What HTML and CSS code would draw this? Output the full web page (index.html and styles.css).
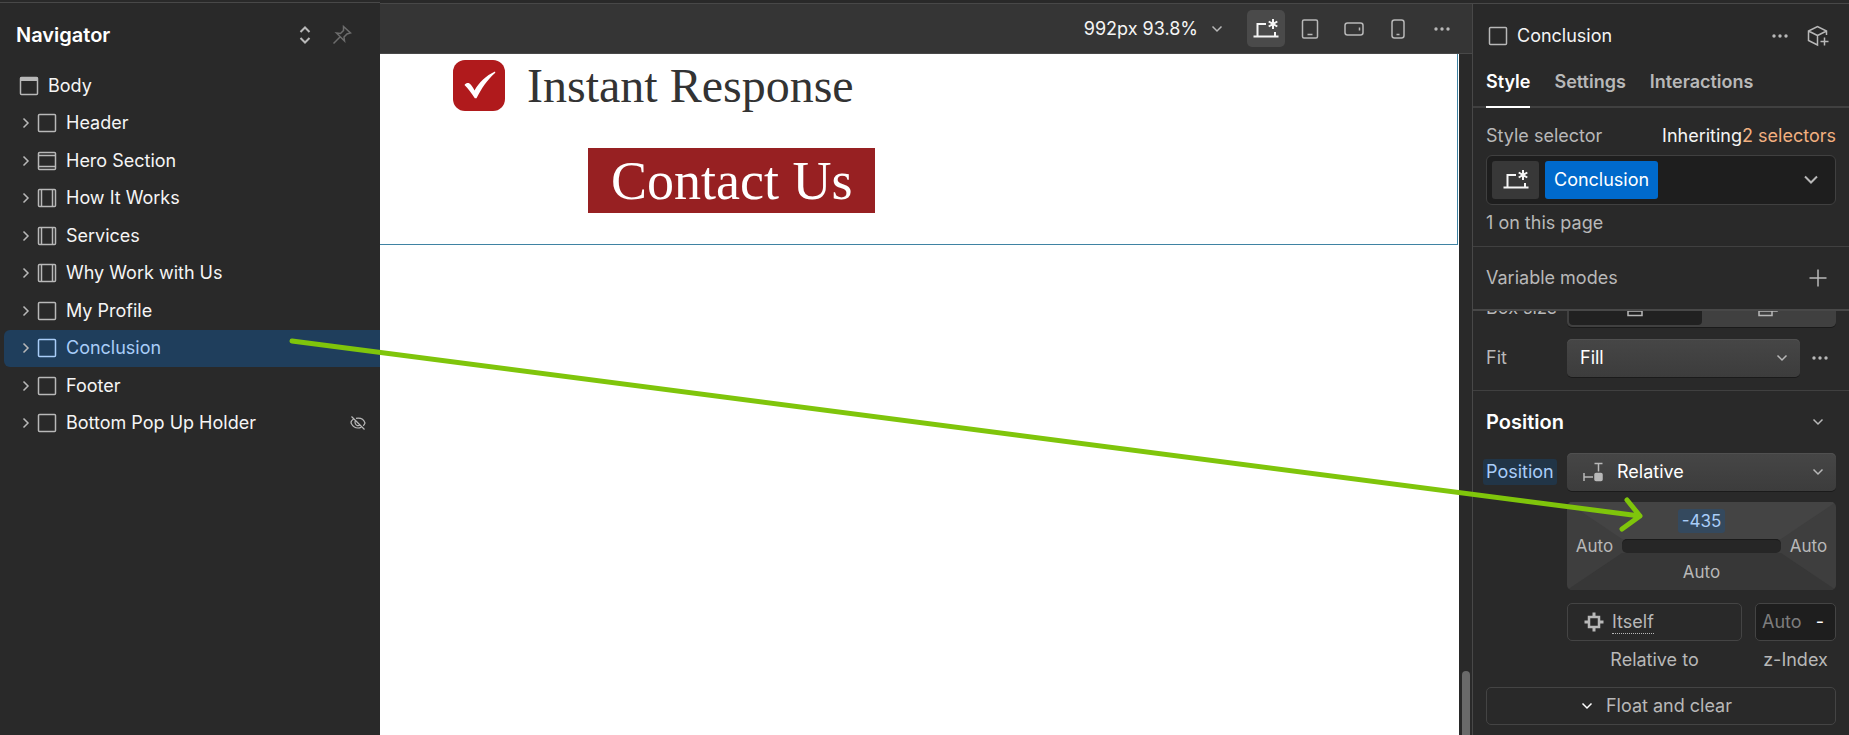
FILE: index.html
```html
<!DOCTYPE html>
<html lang="en">
<head>
<meta charset="utf-8">
<title>Designer</title>
<link rel="stylesheet" href="styles.css">
</head>
<body>
<svg class="symbols" width="0" height="0" aria-hidden="true">
  <symbol id="i-box" viewBox="0 0 20 20"><rect x="1.5" y="1.5" width="17" height="17" rx="1"/></symbol>
  <symbol id="i-body" viewBox="0 0 20 20"><rect x="1.5" y="1.5" width="17" height="17" rx="1"/><path d="M1.5 3h17" stroke-width="4"/></symbol>
  <symbol id="i-section" viewBox="0 0 20 20"><rect x="1.5" y="1.5" width="17" height="17" rx="1"/><path d="M1.500 4.500h17M1.500 15.500h17"/></symbol>
  <symbol id="i-container" viewBox="0 0 20 20"><rect x="1.5" y="1.5" width="17" height="17" rx="1"/><path d="M4.500 1.500v17M15.500 1.500v17"/></symbol>
  <symbol id="i-right" viewBox="0 0 10 14"><path d="M2.500 2.500 7 7l-4.500 4.500"/></symbol>
  <symbol id="i-down" viewBox="0 0 14 10"><path d="M2.500 2.500 7 7l4.500-4.500"/></symbol>
  <symbol id="i-dots" viewBox="0 0 18 6"><g fill="currentColor" stroke="none"><circle cx="3" cy="3" r="1.700"/><circle cx="9" cy="3" r="1.700"/><circle cx="15" cy="3" r="1.700"/></g></symbol>
  <symbol id="i-base" viewBox="0 0 26 22"><path stroke-width="2" d="M.5 18.500h25M4.500 18V6H13M22 14v4"/><path stroke-width="2" d="M20 1v10M15.700 3.500l8.600 5M24.300 3.500l-8.600 5"/></symbol>
</svg>
<div class="app">
  <aside class="navigator">
    <header class="nav-head">
      <h2 class="heading">Navigator</h2>
      <button class="icon-btn" aria-label="Expand or collapse all"><svg class="icon" width="14" height="20" viewBox="0 0 14 20"><path stroke-width="2" d="M2.500 7 7 2.500 11.500 7M2.500 13 7 17.500l4.500-4.500"/></svg></button>
      <button class="icon-btn dim" aria-label="Pin"><svg class="icon" width="20" height="20" viewBox="0 0 20 20"><path d="M1.500 18.500 8 12M11.500 1.500l7 6.500-3.500 1-3 3 .5 4L4.500 8l4 .5 3-3z"/></svg></button>
    </header>
    <ul class="tree">
      <li class="row root"><svg class="icon glyph"><use href="#i-body"/></svg><span>Body</span></li>
      <li class="row"><svg class="icon twist"><use href="#i-right"/></svg><svg class="icon glyph"><use href="#i-box"/></svg><span>Header</span></li>
      <li class="row"><svg class="icon twist"><use href="#i-right"/></svg><svg class="icon glyph"><use href="#i-section"/></svg><span>Hero Section</span></li>
      <li class="row"><svg class="icon twist"><use href="#i-right"/></svg><svg class="icon glyph"><use href="#i-container"/></svg><span>How It Works</span></li>
      <li class="row"><svg class="icon twist"><use href="#i-right"/></svg><svg class="icon glyph"><use href="#i-container"/></svg><span>Services</span></li>
      <li class="row"><svg class="icon twist"><use href="#i-right"/></svg><svg class="icon glyph"><use href="#i-container"/></svg><span>Why Work with Us</span></li>
      <li class="row"><svg class="icon twist"><use href="#i-right"/></svg><svg class="icon glyph"><use href="#i-box"/></svg><span>My Profile</span></li>
      <li class="row selected"><svg class="icon twist"><use href="#i-right"/></svg><svg class="icon glyph"><use href="#i-box"/></svg><span>Conclusion</span></li>
      <li class="row"><svg class="icon twist"><use href="#i-right"/></svg><svg class="icon glyph"><use href="#i-box"/></svg><span>Footer</span></li>
      <li class="row"><svg class="icon twist"><use href="#i-right"/></svg><svg class="icon glyph"><use href="#i-box"/></svg><span class="grow">Bottom Pop Up Holder</span><svg class="icon" width="16" height="16" viewBox="0 0 16 16"><path stroke-width="1.200" d="M1.500 1.500l13 13M3.500 4C2 5 1 6.500 1 8c1.500 3 4 5 7 5 1.200 0 2.300-.3 3.200-.8M6 3.300C11 2.500 14 5 15 8c-.4 1-1 2-1.800 2.700M5.500 5.500C4.500 7 5 9.500 7 10.500c1 .4 2 .2 3-.4"/></svg></li>
    </ul>
  </aside>

  <main class="stage">
    <div class="toolbar">
      <button class="zoom"><span>992px</span><span>93.8%</span><svg class="icon down"><use href="#i-down"/></svg></button>
      <div class="devices">
        <button class="device active" aria-label="Desktop"><svg class="icon base"><use href="#i-base"/></svg></button>
        <button class="device" aria-label="Tablet"><svg class="icon" width="18" height="22" viewBox="0 0 18 22"><rect x="1.500" y="2" width="15" height="18" rx="1.500"/><path d="M6.500 16.500h5"/></svg></button>
        <button class="device" aria-label="Mobile landscape"><svg class="icon" width="20" height="14" viewBox="0 0 20 14"><rect x="1" y="1" width="18" height="12" rx="2.500"/><path d="M15.500 5.500v3"/></svg></button>
        <button class="device" aria-label="Mobile portrait"><svg class="icon" width="14" height="20" viewBox="0 0 14 20"><rect x="1" y="1" width="12" height="18" rx="2.500"/><path d="M5.500 15.500h3"/></svg></button>
        <button class="device" aria-label="More"><svg class="icon dots"><use href="#i-dots"/></svg></button>
      </div>
    </div>
    <div class="viewport">
      <div class="page">
        <section class="conclusion">
          <div class="benefit">
            <svg width="52" height="51" viewBox="0 0 52 51" aria-hidden="true"><rect width="52" height="51" rx="12" fill="#b01a1c"/><path fill="#fff" d="M11.500 25c1.500-2 3.500-2.500 5-1.500 2 1.500 3.500 4 5 7C26 22.500 33 15.500 42 11.500l.3 1.200C34 20 28.500 28.500 23.500 38.200h-1.700C18.500 33 15 28.500 11.500 25z"/></svg>
            <span>Instant Response</span>
          </div>
          <a class="contact" href="#">Contact Us</a>
        </section>
      </div>
      <div class="gutter"><div class="thumb"></div></div>
    </div>
  </main>

  <aside class="inspector">
    <header class="insp-head">
      <svg class="icon glyph"><use href="#i-box"/></svg><span class="grow">Conclusion</span>
      <button class="icon-btn" aria-label="More"><svg class="icon dots"><use href="#i-dots"/></svg></button>
      <button class="icon-btn" aria-label="Create component"><svg class="icon" width="22" height="22" viewBox="0 0 22 22"><path d="M19.500 10V6L10.500 1.500l-9 4.500v9.500l9 4.500V10.500l9-4.500M1.500 6l9 4.500M17.500 12.500v8M13.500 16.500h8"/></svg></button>
    </header>
    <nav class="tabs">
      <button class="tab current">Style</button>
      <button class="tab">Settings</button>
      <button class="tab">Interactions</button>
    </nav>
    <section class="selector">
      <div class="line"><span class="grow">Style selector</span><span class="white">Inheriting</span><a class="inherit" href="#">2 selectors</a></div>
      <div class="selector-box">
        <button class="chip" aria-label="Breakpoint"><svg class="icon base"><use href="#i-base"/></svg></button>
        <button class="chip class-chip">Conclusion</button>
        <button class="icon-btn push" aria-label="Open selector list"><svg class="icon" width="16" height="12" viewBox="0 0 16 12"><path stroke-width="2" d="M2 2.500l6 6 6-6"/></svg></button>
      </div>
      <p class="count">1 on this page</p>
    </section>
    <section class="modes">
      <span class="grow">Variable modes</span>
      <button class="icon-btn" aria-label="Add"><svg class="icon" width="18" height="18" viewBox="0 0 18 18"><path d="M9 .500v17M.500 9h17"/></svg></button>
    </section>
    <div class="scroller">
      <section class="size">
        <div class="field boxsize">
          <span>Box size</span>
          <div class="segments">
            <button class="segment on" aria-label="Border box"><svg class="icon" width="16" height="18" viewBox="0 0 16 18"><path d="M1 1v15.500h14V1M1 12h14"/></svg></button>
            <button class="segment" aria-label="Content box"><svg class="icon" width="20" height="18" viewBox="0 0 20 18"><path d="M1 12v4.500h13V12M1 12h18V3"/></svg></button>
          </div>
        </div>
        <div class="field">
          <label for="fit">Fit</label>
          <div class="fit">
            <div class="select"><select id="fit"><option>Fill</option></select><svg class="icon down"><use href="#i-down"/></svg></div>
            <button class="icon-btn" aria-label="More"><svg class="icon dots"><use href="#i-dots"/></svg></button>
          </div>
        </div>
      </section>
      <section class="position">
        <div class="line"><h3 class="heading grow">Position</h3><button class="icon-btn" aria-label="Collapse"><svg class="icon down"><use href="#i-down"/></svg></button></div>
        <div class="field">
          <label class="tag" for="pos">Position</label>
          <div class="select with-icon">
            <svg class="icon lead" width="20" height="20" viewBox="0 0 20 20"><path d="M11.500 1.500h8M15.500 1.500v8M1 11v8M1 15h9"/><rect x="12" y="11.500" width="7" height="7" rx="1" fill="currentColor"/></svg>
            <select id="pos"><option>Relative</option></select><svg class="icon down"><use href="#i-down"/></svg></div>
        </div>
        <div class="field">
          <div class="offsets">
            <svg class="facets" viewBox="0 0 269 88" preserveAspectRatio="none" aria-hidden="true"><path d="M0 0h269L214 37H55z" fill="#444"/><path d="M0 88h269L214 51H55z" fill="#373737"/></svg>
            <button class="side top">-435</button>
            <button class="side left">Auto</button>
            <div class="hollow"></div>
            <button class="side right">Auto</button>
            <button class="side bottom">Auto</button>
          </div>
        </div>
        <div class="field pair">
          <div class="pair-body">
            <div class="cell wide">
              <button class="outline" id="rel"><svg class="icon" width="20" height="20" viewBox="0 0 20 20"><rect x="5" y="5" width="10" height="10" stroke-width="2.500"/><path stroke-width="3" d="M10 0.500v4M10 15.500v4M.5 10h4M15.500 10h4"/></svg><span class="dotted">Itself</span></button>
              <label for="rel">Relative to</label>
            </div>
            <div class="cell">
              <div class="outline well"><input id="z" placeholder="Auto"><button class="unit">-</button></div>
              <label for="z">z-Index</label>
            </div>
          </div>
        </div>
        <button class="outline float"><svg class="icon down"><use href="#i-down"/></svg>Float and clear</button>
      </section>
    </div>
  </aside>
</div>
<svg class="arrow" viewBox="0 0 1849 735" aria-hidden="true"><path d="M292 341 1640 516M1627 500l13 16-18 13"/></svg>
</body>
</html>
```

FILE: styles.css
```css
* { box-sizing: border-box; }
body {
  margin: 0;
  background: #292929;
  color: #f5f5f5;
  font: 18px/24px Inter, "Liberation Sans", sans-serif;
}
button, input, select { font: inherit; color: inherit; background: none; border: 0; padding: 0; margin: 0; }
h2, h3, p, ul { margin: 0; padding: 0; list-style: none; }
.symbols { position: absolute; }
.app {
  display: grid;
  grid-template-columns: 380px minmax(0, 1fr) 377px;
  height: 100vh;
  padding-top: 2px;
  overflow: hidden;
}
.icon { fill: none; stroke: currentColor; stroke-width: 1.5; color: #b8b8b8; flex: none; display: block; }
.glyph { width: 20px; height: 20px; }
.twist { width: 10px; height: 14px; }
.down { width: 14px; height: 10px; }
.dots { width: 18px; height: 6px; }
.base { width: 26px; height: 22px; color: #f5f5f5; }
.grow { flex: 1; }
.white { color: #f5f5f5; }
.icon-btn { display: flex; align-items: center; justify-content: center; }
.heading { font-size: 20px; line-height: 24px; font-weight: 600; color: #fff; }

.navigator { border-top: 1px solid #484848; }
.nav-head { display: flex; align-items: center; gap: 20px; height: 64px; padding: 0 28px 0 16px; }
.nav-head .heading { flex: 1; }
.dim .icon { color: #6c6c6c; }
.tree { display: grid; grid-auto-rows: 1fr; min-height: 375px; padding-left: 4px; }
.row { display: flex; align-items: center; gap: 9px; padding: 0 14px 0 17px; border-radius: 6px 0 0 6px; }
.row .twist { margin-right: -3px; }
.row.root { padding-left: 15px; }
.selected { background: #1f3e5c; color: #a9cdf8; }
.selected .glyph { color: #a9cdf8; }

.stage { display: flex; flex-direction: column; margin-top: 1px; }
.toolbar {
  display: flex; align-items: center; justify-content: flex-end; gap: 23px;
  height: 51px; padding: 0 11px; background: #353535;
  border-top: 1px solid #484848; border-bottom: 1px solid #484848;
}
.zoom { display: flex; align-items: center; gap: 5px; }
.zoom .down { margin-left: 7px; }
.devices { display: flex; gap: 6px; }
.device { display: grid; place-items: center; width: 38px; height: 37px; border-radius: 5px; }
.device.active { background: #4a4a4a; }
.viewport { flex: 1; display: flex; }
.page { flex: 1; background: #fff; }
.conclusion {
  height: 191px; margin-right: 1px; padding: 6px 0 0 73px;
  border: solid #3f83a3; border-width: 0 1px 1px 0;
  font-family: "Liberation Serif", serif; color: #333;
}
.benefit { display: flex; align-items: center; gap: 22px; font-size: 48px; line-height: 51px; }
.contact {
  display: block; width: max-content; margin: 37px 0 0 135px; padding: 1px 23px 0;
  background: #972022; color: #fff; font-size: 54px; line-height: 64px; text-decoration: none;
}
.gutter { display: flex; align-items: flex-end; width: 13px; padding-left: 3px; }
.thumb { width: 8px; height: 64px; background: #6a6a6a; border-radius: 4px 4px 0 0; }

.inspector {
  display: flex; flex-direction: column; min-height: 0;
  margin-top: 1px; border: solid #484848; border-width: 1px 0 0 1px; color: #b8b8b8;
}
.insp-head { display: flex; align-items: center; gap: 18px; height: 63px; padding: 0 20px 0 15px; color: #f5f5f5; }
.insp-head .glyph { margin-right: -9px; }
.tabs { display: flex; gap: 24px; padding: 0 13px; border-bottom: 2px solid #404040; }
.tab { height: 41px; padding-bottom: 9px; margin-bottom: -2px; border-bottom: 2px solid transparent; font-weight: 600; }
.tab.current { color: #fff; border-color: #fff; }
.selector { display: flex; flex-direction: column; padding: 16px 13px 11px; border-bottom: 1px solid #404040; }
.line { display: flex; align-items: center; }
.inherit { color: #f2b080; text-decoration: none; }
.selector-box {
  display: flex; align-items: center; gap: 6px; height: 50px; margin-top: 7px; padding: 0 16px 0 5px;
  border: 1px solid #404040; border-radius: 6px; background: #1e1e1e;
}
.chip { display: grid; place-items: center; width: 47px; height: 38px; border-radius: 3px; background: #383838; }
.class-chip { width: auto; padding: 0 9px; background: #006acc; color: #fff; }
.push { margin-left: auto; }
.count { margin-top: 6px; }
.modes { display: flex; align-items: center; height: 64px; padding: 0 22px 0 13px; border-bottom: 2px solid #484848; }
.scroller { flex: 1; min-height: 0; overflow: hidden; }
.size { display: grid; gap: 12px; padding: 0 13px 13px; border-bottom: 1px solid #404040; }
.field { display: grid; grid-template-columns: 81px 1fr; align-items: center; }
.boxsize { margin-top: -22px; }
.segments { display: flex; height: 38px; padding: 2px; border-radius: 5px; background: #404040; box-shadow: 0 1px #1a1a1a; }
.segment { flex: 1; display: grid; place-items: center; border-radius: 4px; }
.segment.on { background: #212121; }
.fit { display: grid; grid-template-columns: 1fr 36px; }
.fit .icon-btn { padding-left: 3px; }
.select {
  display: grid; align-items: center; height: 38px; border-radius: 5px;
  background: linear-gradient(#464646, #3c3c3c); box-shadow: 0 1px #1a1a1a, inset 0 1px #505050;
}
.select > * { grid-area: 1 / 1; }
.select select { appearance: none; width: 100%; height: 38px; padding: 0 13px; color: #fff; }
.select .down { justify-self: end; margin-right: 11px; pointer-events: none; }
.select .lead { margin-left: 16px; }
.with-icon select { padding-left: 50px; }

.position { display: grid; gap: 11px; padding: 19px 13px 11px; }
.position .line { padding-right: 11px; margin-bottom: 8px; }
.tag { justify-self: start; margin-left: -3px; padding: 1px 3px; border-radius: 3px; background: #213547; color: #a9cdf8; }
.offsets {
  grid-column: 2; display: grid; grid-template: 37px 14px 37px / 55px 1fr 55px; place-items: center;
  border-radius: 5px; overflow: hidden; background: #3e3e3e; font-size: 17px;
}
.facets { grid-area: 1 / 1 / 4 / 4; width: 100%; height: 100%; }
.side { position: relative; line-height: 24px; }
.top { grid-area: 1 / 2; align-self: end; margin-bottom: 6px; padding: 0 4px; border-radius: 3px; background: #34495e; color: #a9cdf8; }
.left { grid-area: 2 / 1; }
.right { grid-area: 2 / 3; }
.bottom { grid-area: 3 / 2; }
.hollow { grid-area: 2 / 2; position: relative; justify-self: stretch; height: 14px; border-radius: 5px; background: #262626; border-top: 1px solid #1a1a1a; }
.pair { margin-top: 2px; }
.pair-body { grid-column: 2; display: flex; gap: 13px; }
.cell { display: grid; gap: 7px; width: 81px; text-align: center; }
.wide { flex: 1; }
.outline { display: flex; align-items: center; height: 38px; border: 1px solid #444; border-radius: 5px; }
#rel { padding-left: 16px; gap: 8px; }
.dotted { line-height: 22px; border-bottom: 1px dotted #b8b8b8; }
.well { background: #1e1e1e; padding: 0 11px 0 6px; }
.well input { flex: 1; width: 0; min-width: 0; }
.well input::placeholder { color: #7d7d7d; opacity: 1; }
.unit { color: #fff; }
.float { justify-content: center; gap: 12px; margin-top: 4px; padding-right: 10px; }
.float .icon { color: #fff; }

.arrow { position: absolute; left: 0; top: 0; width: 100%; pointer-events: none; fill: none; stroke: #7fc50b; stroke-width: 5; stroke-linecap: round; stroke-linejoin: round; }
```
